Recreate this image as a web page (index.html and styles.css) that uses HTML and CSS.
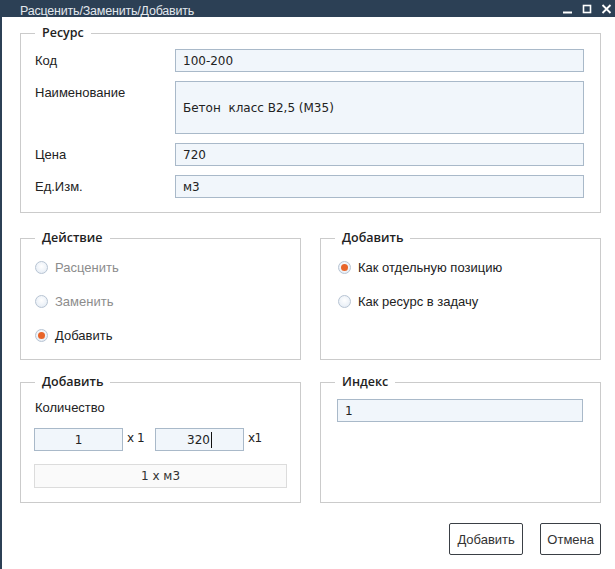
FILE: index.html
```html
<!DOCTYPE html>
<html lang="ru">
<head>
<meta charset="utf-8">
<link rel="stylesheet" href="styles.css">
</head>
<body>
<div class="window">
  <div class="titlebar">
    <span class="title">Расценить/Заменить/Добавить</span>
    <div class="controls">
      <svg class="ctl" width="11" height="10" viewBox="0 0 11 10"><line x1="1" y1="8.5" x2="10" y2="8.5" stroke="#fff" stroke-width="2"/></svg>
      <svg class="ctl" width="10" height="10" viewBox="0 0 10 10"><rect x="1.5" y="1.5" width="7" height="7" fill="none" stroke="#fff" stroke-width="1.6"/></svg>
      <svg class="ctl" width="11" height="10" viewBox="0 0 11 10"><path d="M1.5 1 L9.5 9 M9.5 1 L1.5 9" stroke="#fff" stroke-width="1.8" fill="none"/></svg>
    </div>
  </div>
  <div class="content">
    <fieldset class="group resource">
      <legend>Ресурс</legend>
      <div class="form-grid">
        <span class="lbl">Код</span><div class="field">100-200</div>
        <span class="lbl">Наименование</span><div class="field tall">Бетон&nbsp; класс В2,5 (М35)</div>
        <span class="lbl">Цена</span><div class="field">720</div>
        <span class="lbl">Ед.Изм.</span><div class="field">м3</div>
      </div>
    </fieldset>

    <div class="row row-options">
      <fieldset class="group">
        <legend>Действие</legend>
        <div class="radio-list">
          <div class="radio-row disabled"><span class="radio"></span><span>Расценить</span></div>
          <div class="radio-row disabled"><span class="radio"></span><span>Заменить</span></div>
          <div class="radio-row"><span class="radio checked"></span><span>Добавить</span></div>
        </div>
      </fieldset>
      <fieldset class="group">
        <legend>Добавить</legend>
        <div class="radio-list shifted">
          <div class="radio-row"><span class="radio checked"></span><span>Как отдельную позицию</span></div>
          <div class="radio-row"><span class="radio"></span><span>Как ресурс в задачу</span></div>
        </div>
      </fieldset>
    </div>

    <div class="row row-qty">
      <fieldset class="group qty">
        <legend>Добавить</legend>
        <div class="qty-label">Количество</div>
        <div class="qty-inputs">
          <div class="field small">1</div><span class="mult">x 1</span>
          <div class="field small">320<span class="caret"></span></div><span class="mult">x1</span>
        </div>
        <div class="summary">1 x м3</div>
      </fieldset>
      <fieldset class="group index">
        <legend>Индекс</legend>
        <div class="field index-field">1</div>
      </fieldset>
    </div>

    <div class="actions">
      <button class="btn btn-wide">Добавить</button>
      <button class="btn">Отмена</button>
    </div>
  </div>
</div>
</body>
</html>
```

FILE: styles.css
```css
* { box-sizing: border-box; }
html, body { margin: 0; padding: 0; background: #fff; }
body {
  width: 615px;
  height: 569px;
  overflow: hidden;
  font-family: "Liberation Sans", Arial, sans-serif;
  font-size: 13px;
  color: #222;
}
.window {
  width: 615px;
  height: 569px;
  border-left: 2px solid #2c4055;
  background: #fff;
}
.titlebar {
  height: 17px;
  background: #2c4055;
  display: flex;
  justify-content: space-between;
  align-items: flex-start;
  padding-left: 18px;
  padding-right: 3px;
  overflow: hidden;
}
.title {
  color: #e3e8ee;
  font-size: 12.5px;
  line-height: 17px;
  padding-top: 3px;
  letter-spacing: -0.2px;
}
.controls {
  display: flex;
  gap: 9px;
  padding-top: 4px;
}
.ctl { display: block; }

.content {
  padding: 8px 14px 0 18px;
}
.group {
  margin: 0;
  border: 1px solid #cbcbcb;
  padding: 8px 16px 14px 13px;
  min-inline-size: 0;
}
.group legend {
  padding: 0 7px;
  margin-left: 1px;
  font-family: "Open Sans", "Liberation Sans", sans-serif;
  font-weight: 600;
  font-size: 12.5px;
  line-height: 16px;
  color: #222;
}
.form-grid {
  display: grid;
  grid-template-columns: 141px 1fr;
  row-gap: 9px;
}
.lbl {
  padding-left: 1px;
  line-height: 23px;
  color: #222;
}
.field {
  height: 23px;
  border: 1px solid #a9b9c9;
  background: #f1f6fb;
  font-family: "DejaVu Sans", Verdana, sans-serif;
  font-size: 12px;
  color: #222;
  display: flex;
  align-items: center;
  padding-left: 7px;
}
.field.tall { height: 53px; }

.row {
  display: grid;
  grid-template-columns: 1fr 1fr;
  column-gap: 19px;
}
.row-options { margin-top: 17px; }
.row-options .group { padding-top: 4px; padding-bottom: 7px; }
.radio-list { display: flex; flex-direction: column; padding-left: 1px; }
.radio-list.shifted { padding-left: 4px; }
.radio-row {
  height: 34px;
  display: flex;
  align-items: center;
  gap: 7px;
  color: #222;
}
.radio-row.disabled { color: #8c8c8c; }
.radio {
  width: 13px;
  height: 13px;
  border-radius: 50%;
  border: 1px solid #b7c4d3;
  background: radial-gradient(circle at 50% 40%, #ffffff 0%, #edf2f8 60%, #dde6f0 100%);
  display: flex;
  align-items: center;
  justify-content: center;
  flex: none;
}
.radio.checked::after {
  content: "";
  width: 7px;
  height: 7px;
  border-radius: 50%;
  background: #e8652a;
}

.row-qty { margin-top: 14px; }
.row-qty .group { padding-top: 0; padding-bottom: 14px; }
.qty-label {
  line-height: 16px;
  margin-top: 10px;
  padding-left: 1px;
}
.qty-inputs {
  display: flex;
  align-items: center;
  margin-top: 12px;
}
.field.small {
  width: 89px;
  justify-content: center;
  padding-left: 0;
}
.caret {
  display: inline-block;
  width: 1px;
  height: 16px;
  background: #111;
  margin-left: 1px;
}
.mult {
  font-family: "DejaVu Sans", Verdana, sans-serif;
  font-size: 12px;
  width: 32px;
  padding-left: 4px;
  margin-top: -4px;
  letter-spacing: -0.5px;
}
.summary {
  margin-top: 13px;
  width: 253px;
  height: 24px;
  border: 1px solid #dcdcdc;
  background: #fafafa;
  display: flex;
  align-items: center;
  justify-content: center;
  font-family: "DejaVu Sans", Verdana, sans-serif;
  font-size: 12px;
  color: #333;
}
.index .index-field {
  margin-top: 9px;
  margin-left: 3px;
  margin-right: 1px;
}

.actions {
  display: flex;
  justify-content: flex-end;
  gap: 17px;
  margin-top: 20px;
}
.btn {
  height: 32px;
  border: 1px solid #3a3f45;
  border-radius: 2px;
  background: #fff;
  font-family: "Liberation Sans", Arial, sans-serif;
  font-size: 13px;
  color: #333;
  padding: 0 6px;
  margin: 0;
}
.btn-wide { padding: 0 7.5px; }
```
